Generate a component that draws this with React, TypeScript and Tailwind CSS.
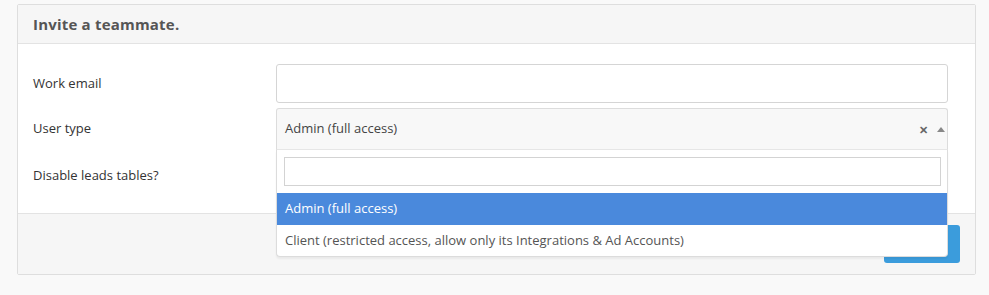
import React from "react";

export default function App() {
  return (
    <div
      className="w-[989px] h-[295px] bg-[#f9f9f9] pt-[4px] pl-[17px] relative overflow-hidden"
      style={{ fontFamily: '"Open Sans", "Noto Sans", sans-serif' }}
    >
      <div className="w-[959px] border border-[#dedede] rounded-[2px] bg-white relative">
        <div className="h-[39px] bg-[#f6f6f6] border-b border-[#e3e3e3] px-[15px] flex items-center">
          <h3 className="text-[15px] font-bold text-[#555] tracking-[0.2px]">Invite a teammate.</h3>
        </div>
        <div className="h-[169px] pt-[20px] px-[15px] text-[13px] text-[#333]">
          <div className="flex items-center h-[39px]">
            <label className="w-[243px]">Work email</label>
            <div className="w-[672px] h-[39px] border border-[#d5d5d5] rounded-[3px] bg-white" />
          </div>
          <div className="flex items-center h-[42px] mt-[5px]">
            <label className="w-[243px]">User type</label>
            <div className="relative w-[672px] h-[42px]">
              <div className="h-[42px] border border-[#dcdcdc] border-b-[#e6e6e6] rounded-t-[3px] bg-[#f8f8f8] flex items-center pl-[8px] pr-[2px] text-[#444]">
                <span className="flex-1">Admin (full access)</span>
                <span className="text-[11px] font-bold text-[#666] mr-[9px] leading-none">✕</span>
                <span className="w-0 h-0 border-l-[4px] border-r-[4px] border-b-[5px] border-l-transparent border-r-transparent border-b-[#888]" />
              </div>
              <div className="absolute left-0 top-[42px] w-[672px] z-10 bg-white border border-[#dcdcdc] border-t-0 rounded-b-[4px] shadow-[0_2px_2px_rgba(0,0,0,0.05)]">
                <div className="pt-[7px] pb-[7px] px-[7px]">
                  <div className="h-[29px] border border-[#d3d3d3] bg-white w-[657px]" />
                </div>
                <div className="h-[32px] bg-[#4a89dc] text-white flex items-center pl-[8px]">Admin (full access)</div>
                <div className="h-[31px] flex items-center pl-[8px] text-[#555]">
                  Client (restricted access, allow only its Integrations &amp; Ad Accounts)
                </div>
              </div>
            </div>
          </div>
          <div className="flex items-center h-[40px] mt-[6px]">
            <label className="w-[243px]">Disable leads tables?</label>
          </div>
        </div>
        <div className="h-[61px] border-t border-[#e3e3e3] bg-[#f6f6f6] flex items-center justify-end pr-[15px]">
          <button className="w-[76px] h-[38px] rounded-[3px] bg-[#3b9cdc] text-white text-[13px]">Invite</button>
        </div>
      </div>
    </div>
  );
}
